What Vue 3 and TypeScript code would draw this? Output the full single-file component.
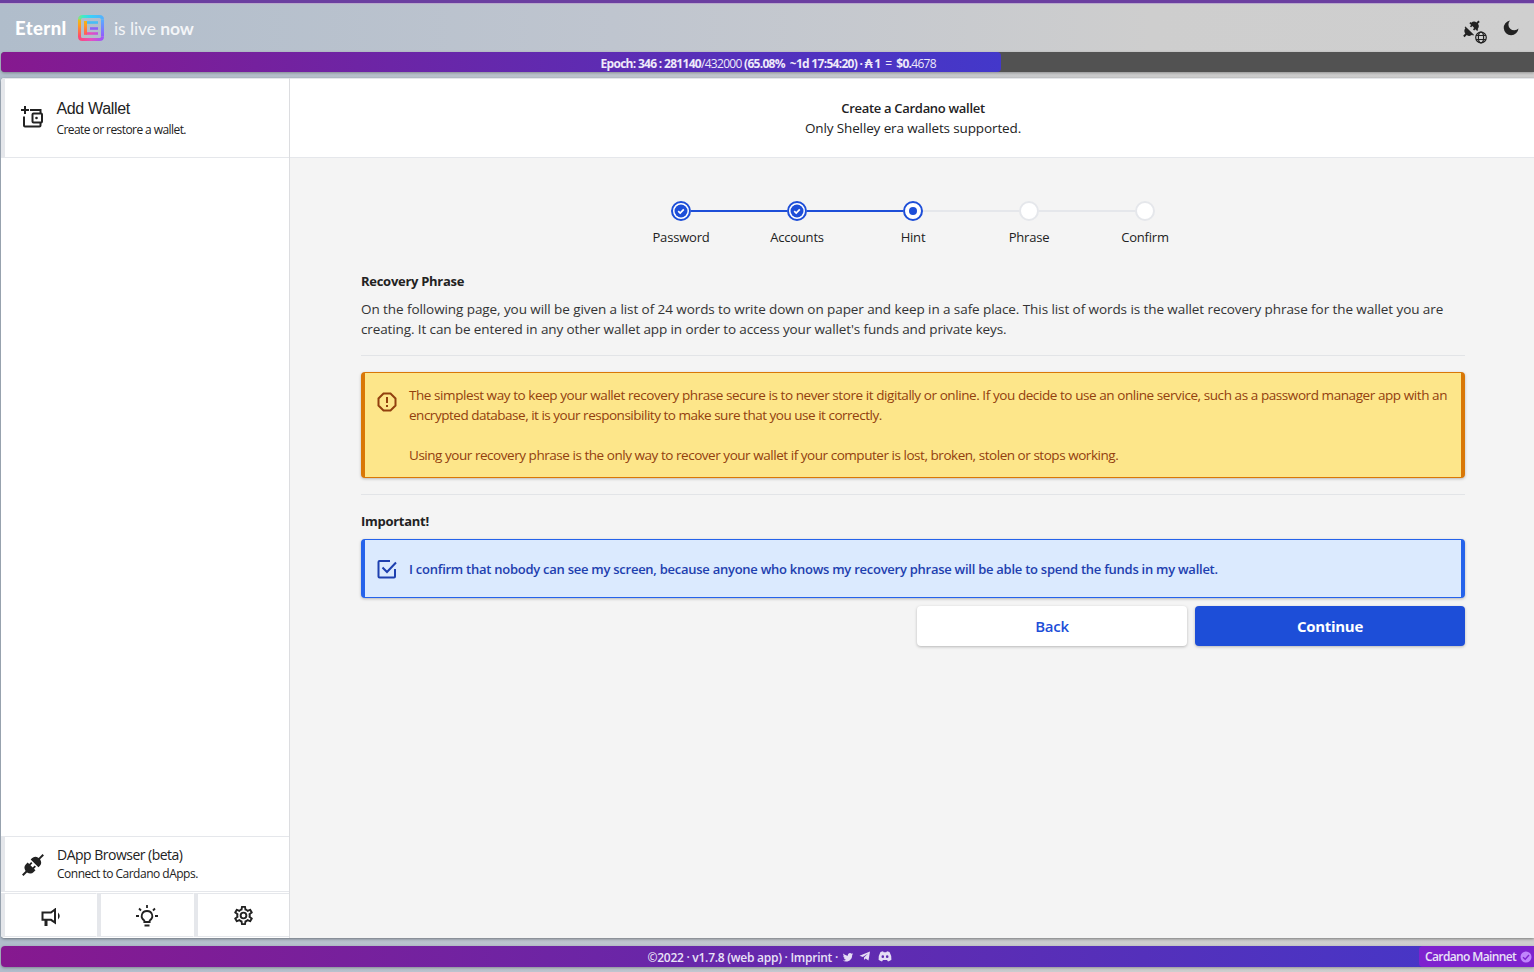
<script setup lang="ts">
type StepState = 'done' | 'current' | 'todo'

interface Step {
  label: string
  state: StepState
}

const steps: Step[] = [
  { label: 'Password', state: 'done' },
  { label: 'Accounts', state: 'done' },
  { label: 'Hint', state: 'current' },
  { label: 'Phrase', state: 'todo' },
  { label: 'Confirm', state: 'todo' },
]

const cog =
  'M12,8A4,4 0 0,1 16,12A4,4 0 0,1 12,16A4,4 0 0,1 8,12A4,4 0 0,1 12,8M12,10A2,2 0 0,0 10,12A2,2 0 0,0 12,14A2,2 0 0,0 14,12A2,2 0 0,0 12,10M10,22C9.75,22 9.54,21.82 9.5,21.58L9.13,18.93C8.5,18.68 7.96,18.34 7.44,17.94L4.95,18.95C4.73,19.03 4.46,18.95 4.34,18.73L2.34,15.27C2.21,15.05 2.27,14.78 2.46,14.63L4.57,12.97L4.5,12L4.57,11L2.46,9.37C2.27,9.22 2.21,8.95 2.34,8.73L4.34,5.27C4.46,5.05 4.73,4.96 4.95,5.05L7.44,6.05C7.96,5.66 8.5,5.32 9.13,5.07L9.5,2.42C9.54,2.18 9.75,2 10,2H14C14.25,2 14.46,2.18 14.5,2.42L14.87,5.07C15.5,5.32 16.04,5.66 16.56,6.05L19.05,5.05C19.27,4.96 19.54,5.05 19.66,5.27L21.66,8.73C21.79,8.95 21.73,9.22 21.54,9.37L19.43,11L19.5,12L19.43,13L21.54,14.63C21.73,14.78 21.79,15.05 21.66,15.27L19.66,18.73C19.54,18.95 19.27,19.04 19.05,18.95L16.56,17.95C16.04,18.34 15.5,18.68 14.87,18.93L14.5,21.58C14.46,21.82 14.25,22 14,22H10M11.25,4L10.88,6.61C9.68,6.86 8.62,7.5 7.85,8.39L5.44,7.35L4.69,8.65L6.8,10.2C6.4,11.37 6.4,12.64 6.8,13.8L4.68,15.36L5.43,16.66L7.86,15.62C8.63,16.5 9.68,17.14 10.87,17.38L11.24,20H12.76L13.13,17.39C14.32,17.14 15.37,16.5 16.14,15.62L18.57,16.66L19.32,15.36L17.2,13.81C17.6,12.64 17.6,11.37 17.2,10.2L19.31,8.65L18.56,7.35L16.15,8.39C15.38,7.5 14.32,6.86 13.12,6.62L12.75,4H11.25Z'
const bird =
  'M22.46,6C21.69,6.35 20.86,6.58 20,6.69C20.88,6.16 21.56,5.32 21.88,4.31C21.05,4.81 20.13,5.16 19.16,5.36C18.37,4.5 17.26,4 16,4C13.65,4 11.73,5.92 11.73,8.29C11.73,8.63 11.77,8.96 11.84,9.27C8.28,9.09 5.11,7.38 3,4.79C2.63,5.42 2.42,6.16 2.42,6.94C2.42,8.43 3.17,9.75 4.33,10.5C3.62,10.5 2.96,10.3 2.38,10V10.03C2.38,12.11 3.86,13.85 5.82,14.24C5.46,14.34 5.08,14.39 4.69,14.39C4.42,14.39 4.15,14.36 3.89,14.31C4.43,16 6,17.26 7.89,17.29C6.43,18.45 4.58,19.13 2.56,19.13C2.22,19.13 1.88,19.11 1.54,19.07C3.44,20.29 5.7,21 8.12,21C16,21 20.33,14.46 20.33,8.79C20.33,8.6 20.33,8.42 20.32,8.23C21.16,7.63 21.88,6.87 22.46,6Z'
</script>

<template>
  <div class="app">
    <header class="top">
      <div class="brand">
        <b class="name">Eternl</b>
        <svg class="logo" viewBox="0 0 26 26">
          <defs>
            <linearGradient id="lt" gradientUnits="userSpaceOnUse" x1="0" x2="26" y1="0" y2="0"><stop offset="0" stop-color="#8fe07a" /><stop offset=".2" stop-color="#3fecc8" /><stop offset=".5" stop-color="#38d0fa" /><stop offset="1" stop-color="#58aefc" /></linearGradient>
            <linearGradient id="lr" gradientUnits="userSpaceOnUse" x1="0" x2="0" y1="4" y2="22"><stop offset="0" stop-color="#55b2ff" /><stop offset="1" stop-color="#9558ff" /></linearGradient>
            <linearGradient id="ll" gradientUnits="userSpaceOnUse" x1="0" x2="0" y1="2" y2="22"><stop offset="0" stop-color="#d9cf1c" /><stop offset=".4" stop-color="#ffa01c" /><stop offset="1" stop-color="#ff4670" /></linearGradient>
            <linearGradient id="lb" gradientUnits="userSpaceOnUse" x1="0" x2="26" y1="0" y2="0"><stop offset="0" stop-color="#ff4670" /><stop offset=".5" stop-color="#e650c0" /><stop offset="1" stop-color="#9558ff" /></linearGradient>
          </defs>
          <g fill="none" stroke-width="3">
            <path d="M24.500 4.500V21.500" stroke="url(#lr)" class="edge" />
            <path d="M1.500 21V21.500Q1.500 24.500 4.500 24.500H21.500Q24.500 24.500 24.500 21.500" stroke="url(#lb)" />
            <path d="M1.500 5V4.500Q1.500 1.500 4.500 1.500H21.500Q24.500 1.500 24.500 4.500" stroke="url(#lt)" />
            <path d="M1.500 4.500Q1.500 13 1.500 21.500" stroke="url(#ll)" />
            <path d="M8 7.500H20" stroke="#48bdf5" stroke-width="2.600" />
            <path d="M12 13.500H20" stroke="#8c62f6" stroke-width="2.600" />
            <path d="M8 18.500H20" stroke="url(#lb)" stroke-width="2.600" />
            <path d="M7.500 6Q7.500 12 7.500 19.800" stroke="url(#ll)" />
          </g>
        </svg>
        <span class="live">is live <b>now</b></span>
      </div>
      <div class="tools">
        <svg class="conn" viewBox="0 0 26 26">
          <g transform="translate(9.300 10) rotate(45)" fill="#222">
            <path d="M-5.500 -2.800V-4.300H-4.500Q-4.300 -8 -1 -8.300V-11H1V-8.300Q4.300 -8 4.500 -4.300H5.500V-2.800H3V-1H1.300V-2.800H-1.300V-1H-3V-2.800Z" />
            <path d="M-6 2.300V3.500H-4.800Q-4.300 7 -1 7.500V10.500H1V7.500Q4.300 7 4.800 3.500H6V2.300Z" />
          </g>
          <g fill="none" stroke="#222" stroke-width="1.200">
            <circle cx="19" cy="18.500" r="5.300" /><ellipse cx="19" cy="18.500" rx="2.600" ry="5.300" /><path d="M14 16.500H24M14 20.500H24" />
          </g>
        </svg>
        <svg class="moon" viewBox="0 0 16 16"><path fill="#222" d="M7 .5A7.400 7.400 0 1 0 15.500 8.500A4.900 4.900 0 0 1 7 .5Z" /></svg>
      </div>
    </header>

    <div class="epoch">
      <div class="fill"></div>
      <div class="epoch-text"><b>Epoch: 346 : 281140</b>/432000 <b>(65.08% &nbsp;~1d 17:54:20) · ₳ 1</b> &nbsp;=&nbsp; <b>$0.</b>4678</div>
    </div>

    <main class="shell">
      <aside>
        <div class="entry add">
          <svg class="i-wallet" viewBox="0 0 24 24" fill="none" stroke="#222" stroke-width="2">
            <path d="M5 1V9M1 5H9M10 5H20.500V8M4 11.500V20.500Q4 21.500 5 21.500H19.500Q20.500 21.500 20.500 20.500V18" />
            <rect x="12.500" y="8.500" width="9.500" height="9" rx="1" /><circle cx="16.500" cy="13" r="1.300" fill="#222" stroke="none" />
          </svg>
          <div><div class="t-add">Add Wallet</div><div class="t-sub">Create or restore a wallet.</div></div>
        </div>
        <div class="space"></div>
        <div class="entry dapp">
          <svg class="i-plug" viewBox="0 0 22 22">
            <g transform="translate(11 11) rotate(45)" fill="#222">
              <path d="M-5.500 -2.200V-4Q-5.500 -8 -1 -9V-14.500H1V-9Q5.500 -8 5.500 -4V-2.200Z" />
              <path d="M-5.500 2V4.500Q-5.500 8.500 -1 9.500V14.500H1V9.500Q5.500 8.500 5.500 4.500V2H3.400V-.8H1.600V2H-1.600V-.8H-3.400V2Z" />
            </g>
          </svg>
          <div><div class="t-dapp">DApp Browser (beta)</div><div class="t-conn">Connect to Cardano dApps.</div></div>
        </div>
        <nav>
          <div><svg class="i-horn" viewBox="0 0 20 18" fill="none" stroke="#222" stroke-width="2"><path d="M14 1.500V14.500L10 11.800H1.500V4.500H10L14 1.500Z" /><path d="M5 12V18" stroke-width="3" /><path d="M17 4.500Q20.500 8 17 11.500Z" fill="#222" stroke="none" /></svg></div>
          <div><svg class="i-bulb" viewBox="0 0 24 24" fill="none" stroke="#222" stroke-width="1.800"><path d="M9.300 18V16.500C4.800 13.500 6.500 7 12 7S19.200 13.500 14.700 16.500V18ZM9.500 21.500H14.500M12 1V4M1 12H4M20 12H23M4 4.500L6 6.500M20 4.500L18 6.500" /></svg></div>
          <div><svg class="i-cog" viewBox="0 0 24 24"><path fill="#222" :d="cog" /></svg></div>
        </nav>
      </aside>

      <section>
        <div class="title">
          <div class="t1">Create a Cardano wallet</div>
          <div class="t2">Only Shelley era wallets supported.</div>
        </div>
        <div class="content">
          <div class="steps">
            <div v-for="s in steps" :key="s.label" class="step" :class="s.state">
              <div class="dot">
                <svg v-if="s.state === 'done'" viewBox="0 0 14 14"><circle cx="7" cy="7" r="6.500" fill="#1d4ed8" /><path d="M4.200 7.200L6.200 9.100L9.800 5.300" fill="none" stroke="#fff" stroke-width="1.700" /></svg>
                <i v-else-if="s.state === 'current'"></i>
              </div>
              <span>{{ s.label }}</span>
            </div>
          </div>
          <h2>Recovery Phrase</h2>
          <div class="para"><div class="p1">On the following page, you will be given a list of 24 words to write down on paper and keep in a safe place. This list of words is the wallet recovery phrase for the wallet you are</div><div class="p2">creating. It can be entered in any other wallet app in order to access your wallet's funds and private keys.</div></div>
          <hr />
          <div class="box warn">
            <svg viewBox="0 0 20 20" fill="none" stroke="#92400e" stroke-width="2"><path d="M6.500 1.500H13.500L18.500 6.500V13.500L13.500 18.500H6.500L1.500 13.500V6.500ZM10 5V11M10 13V15" /></svg>
            <div><div class="w1">The simplest way to keep your wallet recovery phrase secure is to never store it digitally or online. If you decide to use an online service, such as a password manager app with an</div><div class="w2">encrypted database, it is your responsibility to make sure that you use it correctly.</div><div class="w3">Using your recovery phrase is the only way to recover your wallet if your computer is lost, broken, stolen or stops working.</div></div>
          </div>
          <hr />
          <h2>Important!</h2>
          <div class="box info">
            <svg viewBox="0 0 20 20" fill="none" stroke="#1e40af" stroke-width="2"><path d="M13 2H2.500Q1.500 2 1.500 3V17.500Q1.500 18.500 2.500 18.500H17Q18 18.500 18 17.500V10M5.500 8.500L10 13L19 3.500" /></svg>
            <div class="c1">I confirm that nobody can see my screen, because anyone who knows my recovery phrase will be able to spend the funds in my wallet.</div>
          </div>
          <div class="actions"><button class="back">Back</button><button class="go">Continue</button></div>
        </div>
      </section>
    </main>

    <footer>
      <div class="foot">
        <span class="f-text">©2022 · v1.7.8 (web app) · Imprint ·</span>
        <svg class="f-tw" viewBox="0 0 24 24"><path fill="#e5ddf5" :d="bird" /></svg>
        <svg class="f-tg" viewBox="0 0 12 12"><path fill="#e5ddf5" d="M.5 5.800L11 1.500L9.500 10.500L6.500 8.500L5 10V7.500L9 3.500L3.800 7Z" /></svg>
        <svg class="f-dc" viewBox="0 0 14 11"><path fill="#e5ddf5" fill-rule="evenodd" d="M2.500 1L5 .2L5.700 1.200H8.300L9 .2L11.500 1Q13.700 4.500 13.400 8.800Q12 10 10 10.500L9 9H5L4 10.500Q2 10 .6 8.800Q.3 4.500 2.500 1ZM4.800 4.300A1.300 1.400 0 1 0 4.800 7.100A1.300 1.400 0 1 0 4.800 4.300ZM9.200 4.300A1.300 1.400 0 1 0 9.200 7.100A1.300 1.400 0 1 0 9.200 4.300Z" /></svg>
      </div>
      <div class="net"><span>Cardano Mainnet</span><svg viewBox="0 0 12 12"><circle cx="6" cy="6" r="5.500" fill="#c084fc" /><path d="M3 6.200L5.200 8.300L9 4" fill="none" stroke="#7e22ce" stroke-width="1.400" /></svg></div>
    </footer>
  </div>
</template>

<style>
html, body { margin: 0; overflow: hidden; }
</style>

<style scoped>
* { box-sizing: border-box; }
.app { width: 1534px; height: 972px; display: flex; flex-direction: column; border-top: 3px solid #6b3fa0; background: linear-gradient(90deg, #b0bdcb, #bfc5cf 40%, #cecece 75%, #cfcfcf); font-family: "Open Sans", "Noto Sans", sans-serif; color: #222; overflow: hidden; white-space: nowrap; }
svg { display: block; flex: none; }
.top { height: 49px; flex: none; border-top: 1px solid #b9a9cc; display: flex; justify-content: space-between; padding: 0 15px; }
.brand { display: flex; align-items: center; height: 48px; color: #fff; font-family: Lato, sans-serif; }
.name { font-size: 19px; width: 53px; letter-spacing: .4px; font-weight: 900; font-size: 18.500px; }
.logo { width: 26px; height: 26px; margin: 0 10px 0 10px; }
.live { font-size: 17.500px; letter-spacing: -.1px; color: #f3f5f8; }
.tools { display: flex; padding-top: 15px; }
.conn { width: 26px; height: 26px; margin-right: 15px; }
.moon { width: 16px; height: 16px; margin-top: 1px; }
.epoch { height: 20px; flex: none; margin-left: 1px; background: #525252; border-radius: 4px 0 0 4px; position: relative; box-shadow: 0 1px 3px rgba(0,0,0,.3); }
.fill { width: 1000px; height: 20px; border-radius: 4px; background: linear-gradient(90deg, #86198f, #4338ca); }
.epoch-text { position: absolute; top: 2px; left: 599.500px; font-size: 12px; line-height: 20px; letter-spacing: -.7px; color: #eee9fa; }
.shell { height: 860px; flex: none; margin: 6px 0 0 1px; display: flex; border-radius: 4px 0 0 4px; overflow: hidden; background: #f4f4f4; box-shadow: 0 1px 3px rgba(0,0,0,.4); }
aside { width: 289px; background: #fff; display: flex; flex-direction: column; border-right: 1px solid #dcdde0; flex: none; }
.entry { display: flex; border-left: 4px solid #e5e7eb; border-bottom: 1px solid #e5e7eb; }
.add { height: 80px; border-top: 1px solid #e5e7eb; }
.i-wallet { width: 24px; height: 24px; margin: 26px 12.500px 0 15px; }
.t-add { font: 16px/20px "Liberation Sans", sans-serif; margin-top: 20px; letter-spacing: -.35px; }
.t-sub { font-size: 12px; line-height: 20px; margin-top: 1px; letter-spacing: -.57px; font-weight: 500; }
.space { flex: 1; }
.dapp { height: 56px; border-top: 1px solid #e5e7eb; }
.i-plug { width: 22px; height: 22px; margin: 17px 13px 0 17px; }
.t-dapp { font-size: 14px; line-height: 20px; margin-top: 8px; letter-spacing: -.51px; }
.t-conn { font-size: 12px; line-height: 16px; margin-top: 1px; letter-spacing: -.5px; }
nav { height: 46px; display: grid; grid-template-columns: 96px 97px 1fr; padding: 1px 0 1px; }
nav div { border-left: 4px solid #e5e7eb; border-right: 1px solid #fff; border-top: 1px solid #e5e7eb; border-bottom: 1px solid #e5e7eb; display: flex; justify-content: center; align-items: center; }
nav div:last-child { border-right: 0; }
.i-horn { width: 20px; height: 18px; margin-top: 4px; }
.i-bulb { width: 24px; height: 24px; margin-top: 1px; }
.i-cog { width: 23px; height: 23px; margin-top: 1px; }
section { flex: 1; display: flex; flex-direction: column; }
.title { height: 80px; background: #fff; border-top: 1px solid #e5e7eb; border-bottom: 1px solid #e5e7eb; text-align: center; padding: 19px 0 0 2px; font-size: 13.500px; line-height: 20px; }
.t1 { font-size: 13px; font-weight: 600; letter-spacing: -.3px; }
.t2 { letter-spacing: -.13px; }
.content { width: 1104px; margin-left: 71px; display: flex; flex-direction: column; }
.steps { display: flex; width: 580px; margin: 43px auto 0; height: 70px; }
.step { width: 116px; display: flex; flex-direction: column; align-items: center; position: relative; font-size: 13px; line-height: 20px; font-weight: 500; letter-spacing: -.2px; }
.step + .step::before { content: ""; position: absolute; right: 68px; top: 9px; width: 96px; height: 2px; background: #1d4ed8; }
.step.todo::before { background: #e5e7eb !important; }
.dot { width: 20px; height: 20px; border: 2px solid #1d4ed8; border-radius: 50%; background: #fff; display: flex; align-items: center; justify-content: center; }
.dot svg { width: 14px; height: 14px; }
.dot i { width: 8px; height: 8px; border-radius: 50%; background: #1d4ed8; }
.todo .dot { border-color: #e5e7eb; }
.step span { margin-top: 6px; }
h2 { margin: 0; font-size: 13px; line-height: 20px; font-weight: 700; letter-spacing: -.28px; }
.para { margin-top: 8px; font-size: 13.500px; line-height: 20px; color: #333; letter-spacing: -.078px; }
.p2 { letter-spacing: -.115px; }
hr { width: 100%; border: 0; border-top: 1px solid #e2e4e7; margin: 16px 0; }
.box { border: 1px solid; border-left-width: 4px; border-right-width: 4px; border-radius: 4px; display: flex; box-shadow: 0 1px 3px rgba(0,0,0,.25); font-size: 13.500px; line-height: 20px; flex: none; }
.box svg { width: 20px; height: 20px; margin-left: 12px; margin-right: 12px; }
.warn { height: 106px; border-color: #d97706; background: #fde68a; color: #92400e; padding-top: 12px; }
.warn svg { margin-top: 7px; }
.w1 { letter-spacing: -.425px; }
.w2 { letter-spacing: -.485px; }
.w3 { margin-top: 20px; letter-spacing: -.46px; }
.info { height: 59px; margin-top: 8px; border-color: #2563eb; background: #dbeafe; color: #1e40af; align-items: center; font-weight: 600; font-size: 13px; letter-spacing: -.26px; }
.actions { display: flex; justify-content: flex-end; gap: 8px; margin-top: 8px; }
button { width: 270px; height: 40px; border: 0; border-radius: 4px; font: 600 15px/20px "Open Sans", sans-serif; letter-spacing: -.3px; box-shadow: 0 1px 3px rgba(0,0,0,.25); padding: 0; }
.back { background: #fff; color: #1d4ed8; }
.go { background: #1d4ed8; color: #fff; font-weight: 700; }
footer { height: 21px; flex: none; margin: 8px 0 0 1px; position: relative; border-radius: 4px 0 0 4px; background: linear-gradient(90deg, #86198f, #4338ca); box-shadow: 0 1px 3px rgba(0,0,0,.3); color: #e9e2f7; font-size: 12px; font-weight: 600; line-height: 22px; }
.foot { display: flex; padding-left: 646.500px; }
.f-text { width: 194.500px; letter-spacing: -.26px; line-height: 24px; height: 21px; }
.f-tw { width: 12px; height: 12px; margin-top: 5px; }
.f-tg { width: 12px; height: 12px; margin: 4px 0 0 5px; }
.f-dc { width: 14px; height: 11px; margin: 5px 0 0 7px; }
.net { position: absolute; right: 0; top: 0; width: 115px; height: 21px; background: #7e22ce; border-radius: 4px 0 0 4px; padding-left: 6px; display: flex; }
.net span { width: 95px; letter-spacing: -.62px; }
.net svg { width: 12px; height: 12px; margin-top: 5px; }
</style>
